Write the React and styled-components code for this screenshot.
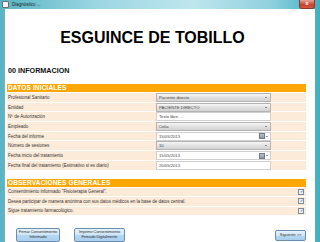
import React from 'react'
import styled, { createGlobalStyle } from 'styled-components'

const Global = createGlobalStyle`
html,body{margin:0;padding:0;}
body{width:320px;height:242px;overflow:hidden;font-family:"Liberation Sans",Arial,sans-serif;}
`
const Window = styled.div`
width:320px;
height:242px;
display:flex;
flex-direction:column;
background:linear-gradient(90deg,#58b4c4 0%,#9bd6e2 30%,#bfe6ee 60%,#8fd0de 85%,#3fb0c0 100%);
`
const TitleBar = styled.div`
height:11px;
display:flex;
align-items:center;
padding-left:2px;
gap:3px;
`
const AppIcon = styled.div`
width:5px;
height:5px;
border:1px solid #6b6b6b;
border-radius:1px;
background:#f4f4f4;
`
const TitleText = styled.span`
font-size:4.5px;
color:#222;
`
const Close = styled.div`
margin-left:auto;
margin-right:5px;
align-self:flex-start;
width:14px;
height:8px;
border-radius:0 0 3px 3px;
background:linear-gradient(#e8a496,#c7402c 60%,#d65b44);
border:1px solid #8c3a2e;
border-top:none;
color:#fff;
font-size:6px;
font-weight:bold;
line-height:7px;
text-align:center;
`
const Frame = styled.div`
flex:1;
display:flex;
padding:0 5px 0 4px;
`
const Content = styled.div`
flex:1;
background:#fff;
border-left:1px solid #8aa;
display:flex;
flex-direction:column;
padding:0 9px 0 2px;
`
const BigTitle = styled.h1`
margin:20px 0 0 0;
font-size:16px;
line-height:17px;
font-weight:bold;
color:#000;
text-align:center;
padding-right:8px;
`
const Sub = styled.div`
margin-top:21px;
padding-left:1px;
font-size:7.2px;
font-weight:bold;
color:#111;
line-height:8px;
`
const Header = styled.div`
margin-top:${p=>p.$top}px;
height:8px;
background:#fea704;
color:#fff;
font-weight:bold;
font-size:6.6px;
line-height:8px;
padding-left:1px;
letter-spacing:0.1px;
`
const Rows = styled.div`
display:flex;
flex-direction:column;
gap:1px;
margin-top:1px;
`
const Row = styled.div`
height:${p=>p.$h}px;
display:grid;
grid-template-columns:148px 115px 1fr;
align-items:center;
background:#fdebd9;
padding-left:1px;
`
const Label = styled.span`
font-size:4.5px;
color:#333;
white-space:nowrap;
`
const Select = styled.div`
height:7px;
border:1px solid #b3b3b3;
background:linear-gradient(#f6f6f6,#e0e0e0 55%,#d2d2d2);
display:flex;
align-items:center;
justify-content:space-between;
padding:0 3px 0 2px;
font-size:4.2px;
color:#444;
`
const Arrow = styled.span`
width:0;
height:0;
border-left:1.3px solid transparent;
border-right:1.3px solid transparent;
border-top:1.5px solid #333;
`
const Field = styled.div`
height:7px;
border:1px solid #cfcfcf;
background:#fff;
display:flex;
align-items:center;
padding:0 2px;
font-size:4.2px;
color:#444;
gap:1px;
`
const Cal = styled.span`
margin-left:auto;
width:4px;
height:4px;
background:linear-gradient(#b8c2cc,#8a98a6);
border:0.5px solid #778;
`
const ObsRow = styled.div`
height:${p=>p.$h}px;
display:flex;
align-items:center;
justify-content:space-between;
background:#fdebd9;
padding:0 2px 0 1px;
`
const Check = styled.span`
width:4px;
height:4px;
border:0.6px solid #7a8a99;
background:#eef3f8;
color:#224;
font-size:4px;
line-height:4px;
text-align:center;
`
const Footer = styled.div`
margin-top:13px;
display:flex;
align-items:flex-start;
gap:14px;
padding-left:9px;
`
const Btn = styled.div`
width:${p=>p.$w}px;
height:${p=>p.$h}px;
margin-left:${p=>p.$ml||0};
margin-top:${p=>p.$mt||0}px;
border:1px solid #6a8fb0;
border-radius:2px;
background:linear-gradient(#e6f2fb,#cfe6f7 50%,#b6d7f1 51%,#a9cfee);
font-size:4px;
color:#333;
display:flex;
flex-direction:column;
align-items:center;
justify-content:center;
line-height:4.8px;
text-align:center;
white-space:nowrap;
letter-spacing:-0.1px;
`

const datos = [
  ['Profesional Sanitario','select','Paciente directo'],
  ['Entidad','select','PACIENTE DIRECTO'],
  ['Nº de Autorización','text','Texto libre ...'],
  ['Empleado','select','Celia'],
  ['Fecha del informe','date','15/05/2013'],
  ['Número de sesiones','select','10'],
  ['Fecha inicio del tratamiento','date','15/05/2013'],
  ['Fecha final del tratamiento (Estimativo si es diario)','text','20/05/2013'],
]
const obs = [
  'Consentimiento informado "Fisioterapia General".',
  'Desea participar de manera anónima con sus datos médicos en la base de datos central.',
  'Sigue tratamiento farmacológico.',
]

const Control = ({type,value}) => {
  if(type==='select') return <Select><span>{value}</span><Arrow/></Select>
  if(type==='date') return <Field><span>{value}</span><Cal/><Arrow/></Field>
  return <Field><span>{value}</span></Field>
}

const App = () => {
  return (
    <Window>
      <Global/>
      <TitleBar>
        <AppIcon/>
        <TitleText>Diagnóstico ...</TitleText>
        <Close>x</Close>
      </TitleBar>
      <Frame>
        <Content>
          <BigTitle>ESGUINCE DE TOBILLO</BigTitle>
          <Sub>00 INFORMACION</Sub>
          <Header $top={9}>DATOS INICIALES</Header>
          <Rows>
            {datos.map(([l,t,v])=>(
              <Row key={l} $h={8.7}>
                <Label>{l}</Label>
                <Control type={t} value={v}/>
              </Row>
            ))}
          </Rows>
          <Header $top={9}>OBSERVACIONES GENERALES</Header>
          <Rows>
            {obs.map(o=>(
              <ObsRow key={o} $h={8.6}>
                <Label>{o}</Label>
                <Check>✓</Check>
              </ObsRow>
            ))}
          </Rows>
          <Footer>
            <Btn $w={42} $h={12}><span>Firmar Consentimiento</span><span>Informado</span></Btn>
            <Btn $w={49} $h={12}><span>Imprimir Consentimiento</span><span>Firmado Digitalmente</span></Btn>
            <Btn $w={29} $h={9} $mt={2} $ml="auto">Siguiente &gt;&gt;</Btn>
          </Footer>
        </Content>
      </Frame>
    </Window>
  )
}

export default App
